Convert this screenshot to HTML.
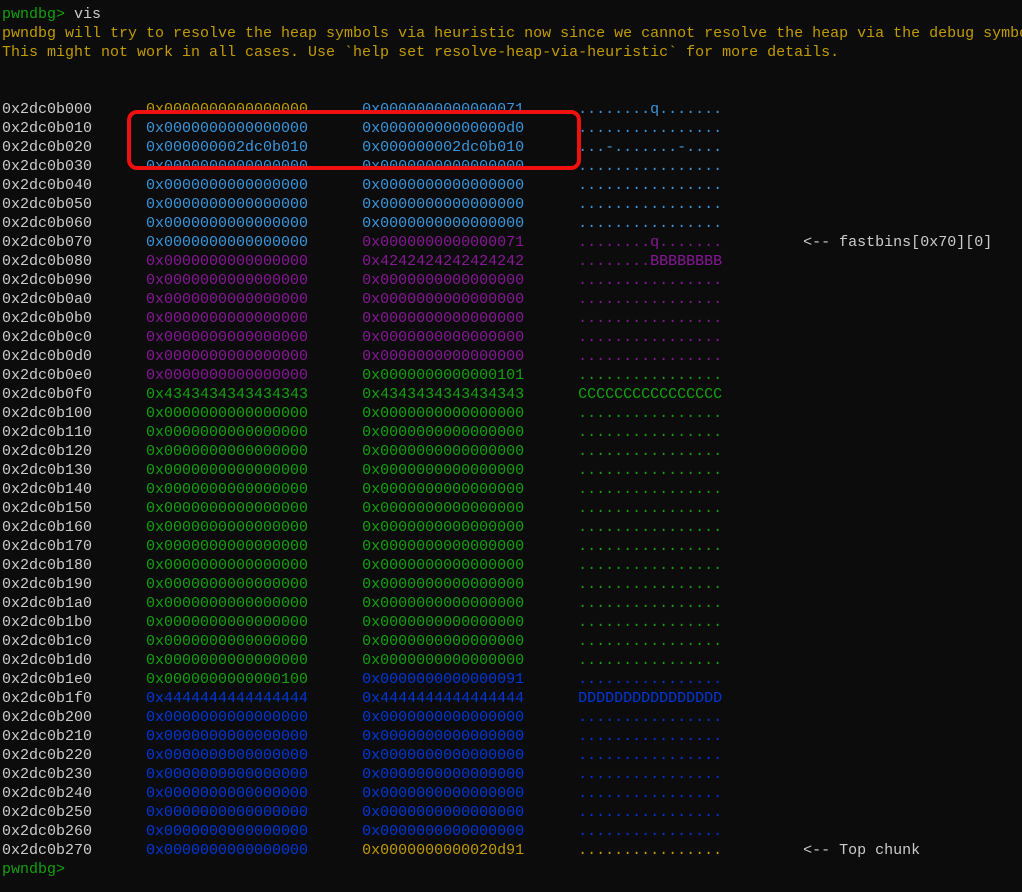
<!DOCTYPE html>
<html><head><meta charset="utf-8"><style>
html,body{margin:0;padding:0;background:#0c0c0c;width:1022px;height:892px;overflow:hidden}
pre{margin:0;padding:5px 0 0 2px;font-family:"Liberation Mono",monospace;font-size:15px;line-height:19px;color:#cccccc;letter-spacing:0;overflow:hidden;width:1020px}
.y{color:#c19c00}.b{color:#3a96dd}.p{color:#881798}.g{color:#13a10e}.d{color:#0037da}.w{color:#cccccc}
#box{position:absolute;left:127px;top:110px;width:446px;height:52px;border:4px solid #f01010;border-radius:10px}
</style></head><body>
<pre><span class="g">pwndbg&gt;</span> vis
<span class="y">pwndbg will try to resolve the heap symbols via heuristic now since we cannot resolve the heap via the debug symbo</span>
<span class="y">This might not work in all cases. Use `help set resolve-heap-via-heuristic` for more details.</span>


0x2dc0b000      <span class="y">0x0000000000000000</span>      <span class="b">0x0000000000000071</span>      <span class="b">........q.......</span>
0x2dc0b010      <span class="b">0x0000000000000000</span>      <span class="b">0x00000000000000d0</span>      <span class="b">................</span>
0x2dc0b020      <span class="b">0x000000002dc0b010</span>      <span class="b">0x000000002dc0b010</span>      <span class="b">...-.......-....</span>
0x2dc0b030      <span class="b">0x0000000000000000</span>      <span class="b">0x0000000000000000</span>      <span class="b">................</span>
0x2dc0b040      <span class="b">0x0000000000000000</span>      <span class="b">0x0000000000000000</span>      <span class="b">................</span>
0x2dc0b050      <span class="b">0x0000000000000000</span>      <span class="b">0x0000000000000000</span>      <span class="b">................</span>
0x2dc0b060      <span class="b">0x0000000000000000</span>      <span class="b">0x0000000000000000</span>      <span class="b">................</span>
0x2dc0b070      <span class="b">0x0000000000000000</span>      <span class="p">0x0000000000000071</span>      <span class="p">........q.......</span>         &lt;-- fastbins[0x70][0]
0x2dc0b080      <span class="p">0x0000000000000000</span>      <span class="p">0x4242424242424242</span>      <span class="p">........BBBBBBBB</span>
0x2dc0b090      <span class="p">0x0000000000000000</span>      <span class="p">0x0000000000000000</span>      <span class="p">................</span>
0x2dc0b0a0      <span class="p">0x0000000000000000</span>      <span class="p">0x0000000000000000</span>      <span class="p">................</span>
0x2dc0b0b0      <span class="p">0x0000000000000000</span>      <span class="p">0x0000000000000000</span>      <span class="p">................</span>
0x2dc0b0c0      <span class="p">0x0000000000000000</span>      <span class="p">0x0000000000000000</span>      <span class="p">................</span>
0x2dc0b0d0      <span class="p">0x0000000000000000</span>      <span class="p">0x0000000000000000</span>      <span class="p">................</span>
0x2dc0b0e0      <span class="p">0x0000000000000000</span>      <span class="g">0x0000000000000101</span>      <span class="g">................</span>
0x2dc0b0f0      <span class="g">0x4343434343434343</span>      <span class="g">0x4343434343434343</span>      <span class="g">CCCCCCCCCCCCCCCC</span>
0x2dc0b100      <span class="g">0x0000000000000000</span>      <span class="g">0x0000000000000000</span>      <span class="g">................</span>
0x2dc0b110      <span class="g">0x0000000000000000</span>      <span class="g">0x0000000000000000</span>      <span class="g">................</span>
0x2dc0b120      <span class="g">0x0000000000000000</span>      <span class="g">0x0000000000000000</span>      <span class="g">................</span>
0x2dc0b130      <span class="g">0x0000000000000000</span>      <span class="g">0x0000000000000000</span>      <span class="g">................</span>
0x2dc0b140      <span class="g">0x0000000000000000</span>      <span class="g">0x0000000000000000</span>      <span class="g">................</span>
0x2dc0b150      <span class="g">0x0000000000000000</span>      <span class="g">0x0000000000000000</span>      <span class="g">................</span>
0x2dc0b160      <span class="g">0x0000000000000000</span>      <span class="g">0x0000000000000000</span>      <span class="g">................</span>
0x2dc0b170      <span class="g">0x0000000000000000</span>      <span class="g">0x0000000000000000</span>      <span class="g">................</span>
0x2dc0b180      <span class="g">0x0000000000000000</span>      <span class="g">0x0000000000000000</span>      <span class="g">................</span>
0x2dc0b190      <span class="g">0x0000000000000000</span>      <span class="g">0x0000000000000000</span>      <span class="g">................</span>
0x2dc0b1a0      <span class="g">0x0000000000000000</span>      <span class="g">0x0000000000000000</span>      <span class="g">................</span>
0x2dc0b1b0      <span class="g">0x0000000000000000</span>      <span class="g">0x0000000000000000</span>      <span class="g">................</span>
0x2dc0b1c0      <span class="g">0x0000000000000000</span>      <span class="g">0x0000000000000000</span>      <span class="g">................</span>
0x2dc0b1d0      <span class="g">0x0000000000000000</span>      <span class="g">0x0000000000000000</span>      <span class="g">................</span>
0x2dc0b1e0      <span class="g">0x0000000000000100</span>      <span class="d">0x0000000000000091</span>      <span class="d">................</span>
0x2dc0b1f0      <span class="d">0x4444444444444444</span>      <span class="d">0x4444444444444444</span>      <span class="d">DDDDDDDDDDDDDDDD</span>
0x2dc0b200      <span class="d">0x0000000000000000</span>      <span class="d">0x0000000000000000</span>      <span class="d">................</span>
0x2dc0b210      <span class="d">0x0000000000000000</span>      <span class="d">0x0000000000000000</span>      <span class="d">................</span>
0x2dc0b220      <span class="d">0x0000000000000000</span>      <span class="d">0x0000000000000000</span>      <span class="d">................</span>
0x2dc0b230      <span class="d">0x0000000000000000</span>      <span class="d">0x0000000000000000</span>      <span class="d">................</span>
0x2dc0b240      <span class="d">0x0000000000000000</span>      <span class="d">0x0000000000000000</span>      <span class="d">................</span>
0x2dc0b250      <span class="d">0x0000000000000000</span>      <span class="d">0x0000000000000000</span>      <span class="d">................</span>
0x2dc0b260      <span class="d">0x0000000000000000</span>      <span class="d">0x0000000000000000</span>      <span class="d">................</span>
0x2dc0b270      <span class="d">0x0000000000000000</span>      <span class="y">0x0000000000020d91</span>      <span class="y">................</span>         &lt;-- Top chunk
<span class="g">pwndbg&gt;</span>
</pre>
<div id="box"></div>
</body></html>
